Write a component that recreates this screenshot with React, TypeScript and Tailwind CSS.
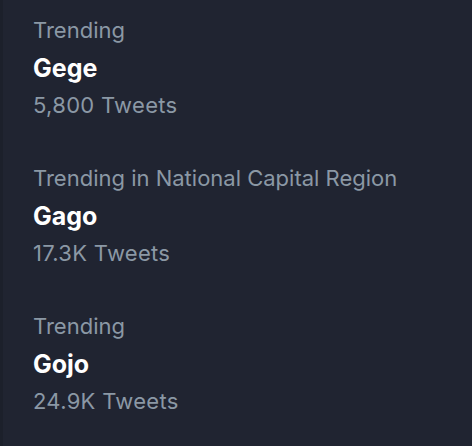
export default function App() {
  const items = [
    { ctx: "Trending", name: "Gege", count: "5,800 Tweets" },
    { ctx: "Trending in National Capital Region", name: "Gago", count: "17.3K Tweets" },
    { ctx: "Trending", name: "Gojo", count: "24.9K Tweets" },
  ];
  return (
    <div
      className="w-[472px] h-[446px] bg-[#202431] border-l-[3px] border-[#1c202b] overflow-hidden pt-[11px]"
      style={{ fontFamily: "Inter, 'Noto Sans', sans-serif" }}
    >
      {items.map((it, i) => (
        <div key={i} className="pl-[30px] pb-[36px]">
          <div className="text-[22px] leading-[38px] text-[#8b98a5]">{it.ctx}</div>
          <div className="text-[25px] leading-[38px] font-bold text-white">{it.name}</div>
          <div className="text-[22px] leading-[36px] text-[#8b98a5] tracking-[0.3px]">{it.count}</div>
        </div>
      ))}
    </div>
  );
}
